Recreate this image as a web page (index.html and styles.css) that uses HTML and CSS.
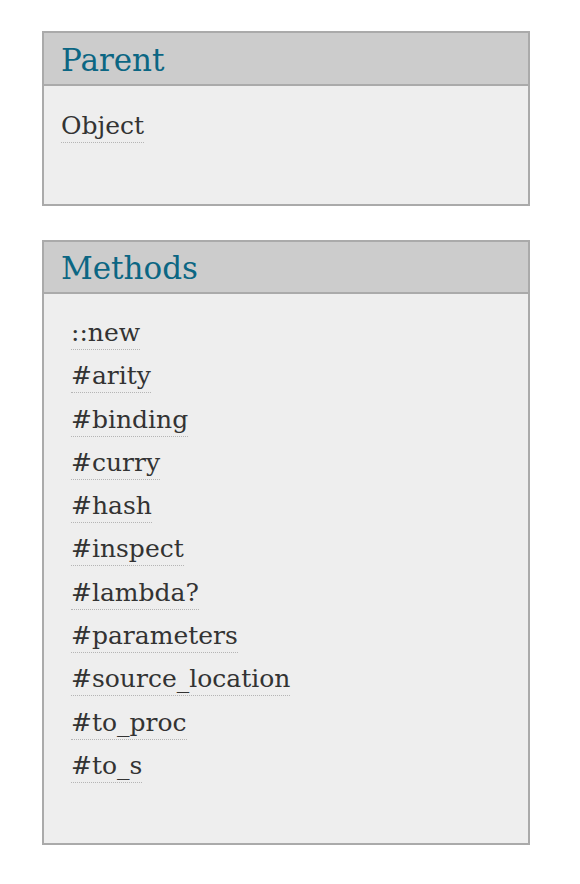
FILE: index.html
```html
<!DOCTYPE html>
<html>
<head>
<meta charset="utf-8">
<link rel="stylesheet" href="styles.css">
</head>
<body>
<div class="page">
  <section class="box parent">
    <h3 class="box-title">Parent</h3>
    <div class="box-body">
      <a class="link" href="#">Object</a>
    </div>
  </section>
  <section class="box methods">
    <h3 class="box-title">Methods</h3>
    <ul class="box-body method-list">
      <li><a class="link" href="#">::new</a></li>
      <li><a class="link" href="#">#arity</a></li>
      <li><a class="link" href="#">#binding</a></li>
      <li><a class="link" href="#">#curry</a></li>
      <li><a class="link" href="#">#hash</a></li>
      <li><a class="link" href="#">#inspect</a></li>
      <li><a class="link" href="#">#lambda?</a></li>
      <li><a class="link" href="#">#parameters</a></li>
      <li><a class="link" href="#">#source_location</a></li>
      <li><a class="link" href="#">#to_proc</a></li>
      <li><a class="link" href="#">#to_s</a></li>
    </ul>
  </section>
</div>
</body>
</html>
```
FILE: styles.css
```css
html, body {
  margin: 0;
  padding: 0;
  background: #fff;
}
.page {
  padding: 31px 0 0 42px;
  display: flex;
  flex-direction: column;
  gap: 34px;
  font-family: "DejaVu Serif", serif;
}
.box {
  width: 484px;
  border: 2px solid #aaa;
  background: #eee;
}
.box-title {
  margin: 0;
  height: 53px;
  box-sizing: border-box;
  background: #ccc;
  border-bottom: 2px solid #aaa;
  color: #0b6683;
  font-weight: normal;
  font-size: 31px;
  line-height: 48px;
  padding: 3px 0 0 17px;
}
.methods .box-title {
  height: 52px;
  padding-top: 2px;
}
.box-body {
  margin: 0;
  list-style: none;
  display: flex;
  flex-direction: column;
  align-items: flex-start;
  box-sizing: border-box;
}
.parent .box-body {
  height: 118px;
  padding: 24px 0 0 17px;
}
.method-list {
  height: 549px;
  padding: 23px 0 0 27px;
}
.method-list li {
  height: 43.3px;
  flex: none;
}
.link {
  color: #333;
  text-decoration: none;
  font-size: 25px;
  line-height: 32px;
  border-bottom: 1px dotted #b5b5b5;
  display: inline-block;
}
```
